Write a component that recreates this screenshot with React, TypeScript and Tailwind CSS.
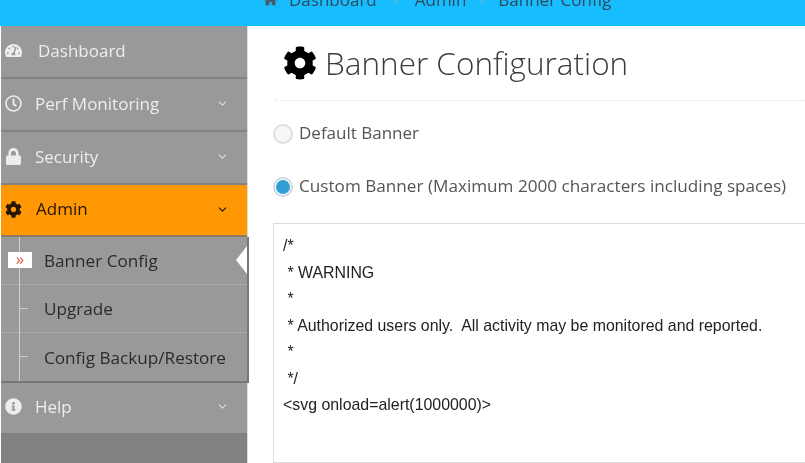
import { FaCog, FaHome, FaInfoCircle, FaLock, FaRegClock, FaTachometerAlt } from "react-icons/fa";
import { LuChevronDown, LuChevronRight } from "react-icons/lu";
import type { ReactNode } from "react";

const font = "font-['Open_Sans',sans-serif]";

function NavRow({ icon, label, chevron = true, labelClass = "ml-[12px]" }: { icon: ReactNode; label: string; chevron?: boolean; labelClass?: string }) {
  return (
    <div className="flex h-[53px] items-center border-b-2 border-[#828282] pb-[2px] pl-[3px] pr-[18px] text-[#ededed]">
      <span className="flex w-[19px] justify-center text-[17px]">{icon}</span>
      <span className={`${labelClass} flex-1 text-[17px]`}>{label}</span>
      {chevron && <LuChevronDown size={13} strokeWidth={2} className="text-[#dcdcdc]" />}
    </div>
  );
}

function SubRow({ label, active = false, last = false }: { label: string; active?: boolean; last?: boolean }) {
  return (
    <div className={`relative flex h-[48px] items-center pl-[43px] pt-[1px] text-[17.15px] text-[#2b2b2b] ${last ? "" : "border-b border-dotted border-[#b5b5b5]"}`}>
      {active ? (
        <span className="absolute left-[7px] top-[15px] flex h-4 w-6 items-center justify-center bg-white pb-[3px] text-[17px] leading-none text-[#dc5a3c]">»</span>
      ) : (
        <span className="absolute left-[19px] top-[23px] h-px w-2 bg-[#c9d2d9]" />
      )}
      {label}
      {active && <span className="absolute right-0 top-[9px] h-0 w-0 border-y-[14px] border-r-[11px] border-y-transparent border-r-white" />}
    </div>
  );
}

export default function App() {
  return (
    <div className={`${font} h-[463px] w-[805px] overflow-hidden bg-white blur-[0.4px]`}>
      <header className="flex h-[26px] items-start overflow-hidden bg-[#17bdff] pl-[263px] text-[17px] text-[#2d4a5a]">
        <div className="-mt-[13px] flex items-center whitespace-nowrap">
          <FaHome className="mr-[11px] text-[15px] text-[#4a5a64]" />
          <span>Dashboard</span>
          <LuChevronRight className="mx-[12px] text-[#5fb6d9]" size={14} />
          <span>Admin</span>
          <LuChevronRight className="mx-[9px] text-[#5fb6d9]" size={14} />
          <span>Banner Config</span>
        </div>
      </header>
      <div className="flex h-[437px]">
        <aside className="ml-px flex w-[246px] shrink-0 flex-col bg-[#828282]">
          <div className="bg-[#999999]">
            <NavRow icon={<FaTachometerAlt />} label="Dashboard" chevron={false} labelClass="ml-[15px]" />
            <NavRow icon={<FaRegClock />} label="Perf Monitoring" />
            <NavRow icon={<FaLock />} label="Security" />
          </div>
          <div className="-mr-[1px] flex h-[52px] items-center border-b-2 border-[#8a7a60] bg-[#ff9804] pb-[2px] pl-[3px] pr-[19px] text-[#241400]">
            <span className="flex w-[19px] justify-center text-[17px]"><FaCog /></span>
            <span className="ml-[13px] flex-1 text-[17px] font-medium">Admin</span>
            <LuChevronDown size={13} strokeWidth={2} />
          </div>
          <div className="relative -mr-[2px] border-r-2 border-b-2 border-[#777777] bg-[#999999]">
            <span className="absolute bottom-0 left-[18px] top-0 w-px bg-[#c9d2d9]" />
            <SubRow label="Banner Config" active />
            <SubRow label="Upgrade" />
            <SubRow label="Config Backup/Restore" last />
          </div>
          <div className="bg-[#999999]">
            <div className="flex h-[50px] items-center pb-[3px] pl-[3px] pr-[18px] text-[#ededed]">
              <span className="flex w-[19px] justify-center text-[17px]"><FaInfoCircle /></span>
              <span className="ml-[12px] flex-1 text-[17px]">Help</span>
              <LuChevronDown size={13} strokeWidth={2} className="text-[#dcdcdc]" />
            </div>
          </div>
        </aside>
        <main className="min-w-0 flex-1 border-l border-[#dddddd] pl-[25px]">
          <div className="ml-[2px] flex h-[75px] items-center border-b border-dotted border-[#e6e6e6] pl-[8px] pb-[1px]">
            <FaCog className="text-[34px] text-black" />
            <h1 className="ml-[8px] whitespace-nowrap text-[31.5px] font-light text-[#3c3c3c]">Banner Configuration</h1>
          </div>
          <label className="mt-[20px] flex h-[24px] items-center whitespace-nowrap text-[17px] text-[#555555]">
            <span className="mt-[1px] h-5 w-5 shrink-0 rounded-full border-2 border-[#dedede] bg-[#f7f7f7]" />
            <span className="ml-[6px]">Default Banner</span>
          </label>
          <label className="mt-[29px] flex h-[24px] items-center whitespace-nowrap text-[17.15px] text-[#555555]">
            <span className="mt-[1px] flex h-5 w-5 shrink-0 items-center justify-center rounded-full border-2 border-[#cfd8e3] bg-white">
              <span className="h-[14px] w-[14px] rounded-full bg-[#2f9fd6]" />
            </span>
            <span className="ml-[6px]">Custom Banner (Maximum 2000 characters including spaces)</span>
          </label>
          <div className="mt-[25px] h-[240px] whitespace-pre border border-r-0 border-[#dcdcdc] pl-[9px] pt-[9px] font-['Liberation_Sans',sans-serif] text-[15.9px] leading-[26.5px] text-[#222222]">
{`/*
 * WARNING
 *
 * Authorized users only.  All activity may be monitored and reported.
 *
 */
<svg onload=alert(1000000)>`}
          </div>
        </main>
      </div>
    </div>
  );
}
